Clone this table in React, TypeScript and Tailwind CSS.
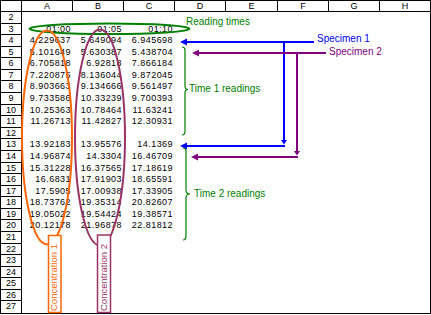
import * as React from 'react';

const columns = ['A', 'B', 'C', 'D', 'E', 'F', 'G', 'H'];
const colWidths = ['w-[51px]', 'w-[51px]', 'w-[51px]', 'w-[51px]', 'w-[52px]', 'w-[51px]', 'w-[51px]', 'w-[50px]'];

const readings: Record<number, string[]> = {
  3: ['01:00', '01:05', '01:10'],
  4: ['4.229637', '5.649094', '6.945698'],
  5: ['5.101649', '5.630387', '5.438704'],
  6: ['6.705818', '6.92818', '7.866184'],
  7: ['7.220875', '8.136044', '9.872045'],
  8: ['8.903663', '9.134666', '9.561497'],
  9: ['9.733586', '10.33239', '9.700393'],
  10: ['10.25363', '10.78464', '11.63241'],
  11: ['11.26713', '11.42827', '12.30931'],
  13: ['13.92183', '13.95576', '14.1369'],
  14: ['14.96874', '14.3304', '16.46709'],
  15: ['15.31228', '16.37565', '17.18619'],
  16: ['16.6831', '17.91903', '18.65591'],
  17: ['17.5905', '17.00938', '17.33905'],
  18: ['18.73762', '19.35314', '20.82607'],
  19: ['19.05022', '19.54424', '19.38571'],
  20: ['20.12178', '21.96878', '22.81812'],
};

const rows = Array.from({ length: 26 }, (_, i) => i + 2);

function Annotations() {
  return (
    <svg className="absolute inset-0 pointer-events-none" width={431} height={315}>
      {/* reading times */}
      <ellipse cx={109.5} cy={28.7} rx={80} ry={5.3} fill="none" stroke="#008000" strokeWidth={2} />

      {/* concentration groups */}
      <ellipse cx={47} cy={137.4} rx={25} ry={107} fill="none" stroke="#ff6600" strokeWidth={2} />
      <ellipse cx={100} cy={137.5} rx={25} ry={108} fill="none" stroke="#993366" strokeWidth={2} />
      <rect x={48.5} y={235.5} width={12.5} height={77} fill="#fff" stroke="#ff6600" strokeWidth={1.5} />
      <rect x={97.5} y={235} width={13} height={77.5} fill="#fff" stroke="#993366" strokeWidth={1.5} />
      <text
        transform="translate(56.5 311) rotate(-90)"
        fontSize={9.5}
        fill="#ff6600"
        fontFamily="'Liberation Sans', Arial, sans-serif"
      >
        Concentration 1
      </text>
      <text
        transform="translate(106.5 311) rotate(-90)"
        fontSize={9.5}
        fill="#993366"
        fontFamily="'Liberation Sans', Arial, sans-serif"
      >
        Concentration 2
      </text>

      {/* specimen 1 */}
      <g stroke="#0000ff" strokeWidth={2} fill="none">
        <path d="M314 42 H185" />
        <path d="M284 42 V141" />
        <path d="M285 146 H185" />
      </g>
      <g fill="#0000ff">
        <polygon points="180,42 187,38.5 187,45.5" />
        <polygon points="281,140 287,140 284,144.5" />
        <polygon points="180,146 187,142.5 187,149.5" />
      </g>

      {/* specimen 2 */}
      <g stroke="#800080" strokeWidth={2} fill="none">
        <path d="M326 53 H197" />
        <path d="M297 53 V152" />
        <path d="M298 157 H196" />
      </g>
      <g fill="#800080">
        <polygon points="192,53 199,49.5 199,56.5" />
        <polygon points="294,151 300,151 297,155.5" />
        <polygon points="191,157 198,153.5 198,160.5" />
      </g>

      {/* braces */}
      <g stroke="#008000" strokeWidth={1.2} fill="none">
        <path d="M182 47 Q185 47 185 50 V86 Q185 89.5 188 89.5 Q185 89.5 185 93 V131 Q185 135 182 135" />
        <path d="M183 148 Q186 148 186 151 V190 Q186 194 190 194 Q186 194 186 198 V236 Q186 240 183 240" />
      </g>
    </svg>
  );
}

export default function App() {
  return (
    <div className="relative w-[431px] h-[315px] bg-white overflow-hidden font-['Liberation_Sans',Arial,sans-serif] text-black">
      <div className="flex flex-col w-[431px] h-[314px] border border-black">
        <div className="flex h-[11px] shrink-0 border-b border-black text-[9px] leading-[10px]">
          <div className="w-[21px] shrink-0 border-r border-black" />
          {columns.map((c, i) => (
            <div
              key={c}
              className={`${colWidths[i]} shrink-0 text-center ${i < columns.length - 1 ? 'border-r border-black' : ''}`}
            >
              {c}
            </div>
          ))}
        </div>

        <div className="flex flex-col flex-1 min-h-0 text-[9px] leading-[11.58px]">
          {rows.map((r) => {
            const vals = readings[r] ?? [];
            return (
              <div key={r} className="flex flex-1 min-h-0">
                <div
                  className={`w-[21px] shrink-0 border-r border-black text-center ${r < 27 ? 'border-b' : ''}`}
                >
                  {r}
                </div>
                {columns.map((c, i) => (
                  <div key={c} className={`${colWidths[i]} shrink-0 pr-[2px] text-right tracking-[0.45px]`}>
                    {vals[i] ?? ''}
                  </div>
                ))}
              </div>
            );
          })}
        </div>
      </div>

      <Annotations />

      <div className="absolute left-[186px] top-[16.5px] text-[10px] leading-[10px] text-[#008000] whitespace-nowrap">
        Reading times
      </div>
      <div className="absolute left-[317px] top-[33.5px] text-[10px] leading-[10px] text-[#0000ff] whitespace-nowrap">
        Specimen 1
      </div>
      <div className="absolute left-[329px] top-[46.5px] text-[10px] leading-[10px] text-[#800080] whitespace-nowrap">
        Specimen 2
      </div>
      <div className="absolute left-[189px] top-[84px] text-[10px] leading-[10px] text-[#008000] whitespace-nowrap">
        Time 1 readings
      </div>
      <div className="absolute left-[194px] top-[189px] text-[10px] leading-[10px] text-[#008000] whitespace-nowrap">
        Time 2 readings
      </div>
    </div>
  );
}
